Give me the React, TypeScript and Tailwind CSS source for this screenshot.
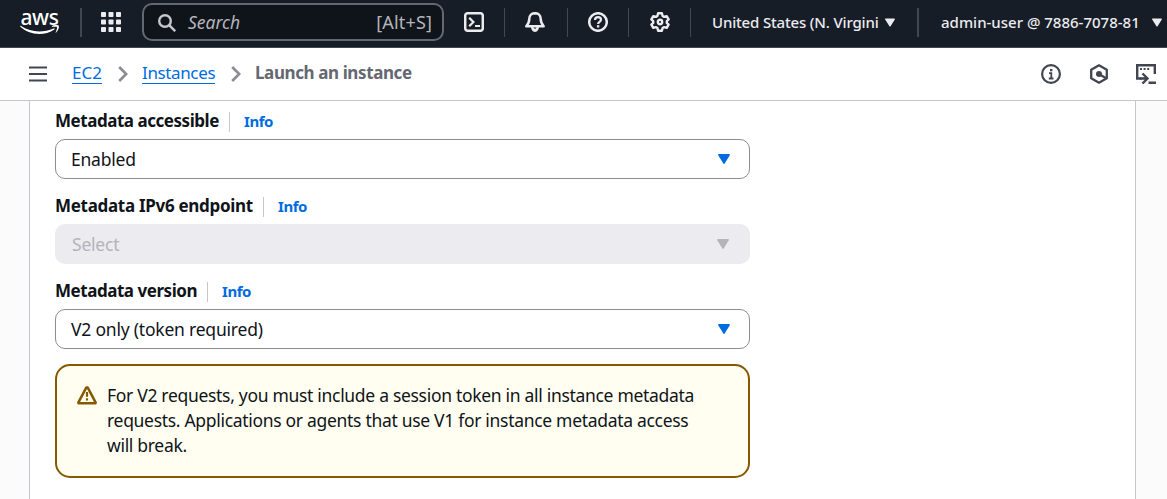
import type { ReactNode } from "react";

function Caret({ className }: { className: string }) {
  return (
    <svg viewBox="0 0 12 10" className={className}>
      <path d="M.9 .9h10.2L6 9.1z" fill="currentColor" stroke="currentColor" strokeWidth="1.6" strokeLinejoin="round" />
    </svg>
  );
}

function AwsLogo() {
  return (
    <div className="flex w-[39px] flex-col items-center text-white">
      <span className="h-[17px] text-[21px] leading-[14px] font-medium tracking-[-0.35px]">aws</span>
      <svg viewBox="0 0 39 10" className="-mt-0.5 h-[10px] w-[39px] shrink-0" fill="currentColor">
        <path d="M.2 1.2C.5.6 1 .8 1.5 1.2 6.500 4.500 12.800 6.400 19.200 6.400c4.800 0 9.900-1 14.500-3 .8-.3 1.300.5.6 1.100C30.200 7.600 24.300 9 19.200 9 11.900 9 5.200 6.200.3 1.800z" />
        <path d="M32 .9C34.500-.4 38 -.2 38.700.500c.7.900-.2 5-2.500 7-.4.300-.7.100-.5-.3.6-1.500 1.700-4.300 1.200-5C36.400 1.600 34 1.800 32.400 1.900c-.6 0-.8-.6-.4-1z" />
      </svg>
    </div>
  );
}

function Icon({ children, className = "" }: { children: ReactNode; className?: string }) {
  return (
    <svg
      viewBox="0 0 20 20"
      fill="none"
      stroke="currentColor"
      strokeWidth="2.5"
      className={`size-5 shrink-0 ${className}`}
    >
      {children}
    </svg>
  );
}

function Divider({ className = "" }: { className?: string }) {
  return <div className={`h-[29px] shrink-0 bg-[#424650] ${className}`} />;
}

function Header() {
  return (
    <header className="flex h-12 items-start overflow-hidden border-b border-[#424650] bg-[#161d26] text-[#ebebf0]">
      <div className="flex h-[44px] items-center pl-5">
        <AwsLogo />
        <Divider className="ml-[21px] w-[2px]" />
        <svg viewBox="0 0 20 20" className="ml-[19px] size-5" fill="currentColor">
          {[0, 7.5, 15].map((y) =>
            [0, 7.5, 15].map((x) => <rect key={`${x}-${y}`} x={x} y={y} width="5" height="5" rx=".8" />),
          )}
        </svg>
        <div className="ml-[21px] flex h-[38px] w-[302px] items-center rounded-[10px] border-2 border-[#656871] bg-[#0f141a] pr-[10px] pl-[14px] text-[#b4b4bb]">
          <svg viewBox="0 0 18 18" className="mt-[2px] size-[18px]" fill="none" stroke="#c6c6cd" strokeWidth="2.4">
            <circle cx="7" cy="7" r="5.8" />
            <path d="m11.200 11.200 6 6" />
          </svg>
          <span className="ml-[12px] text-[17.5px] italic">Search</span>
          <span className="ml-auto text-[18px] tracking-[0.150px]">[Alt+S]</span>
        </div>
        <Icon className="ml-5">
          <rect x="1.200" y="1.200" width="17.600" height="17.600" rx="2.500" />
          <path d="m5.200 5.700 4.200 4.300-4.200 4.300M11 14h5" strokeWidth="2.200" />
        </Icon>
        <Divider className="ml-5 w-px" />
        <Icon className="ml-5">
          <path d="M10 1.200c-3.500 0-5.700 2.400-5.700 5.600 0 3.700-1 5.400-3 7.500h17.400c-2-2.100-3-3.800-3-7.500 0-3.200-2.200-5.600-5.700-5.600Z" strokeLinejoin="round" />
          <path d="M6 14.500c0 2.900 1.500 5.400 4 5.400s4-2.500 4-5.400h-2.500c0 1.300-.5 2.200-1.500 2.200s-1.500-.9-1.500-2.200z" fill="currentColor" stroke="none" />
        </Icon>
        <Divider className="ml-[22px] w-px" />
        <Icon className="ml-5">
          <circle cx="10" cy="10" r="8.800" />
          <path d="M7 8c0-1.800 1.300-2.900 3.100-2.900 1.700 0 2.900 1 2.900 2.600 0 2-2.900 2.200-2.900 4.200" strokeWidth="2.200" />
          <path d="M8.900 13.200h2.400v2.300H8.900z" fill="currentColor" stroke="none" />
        </Icon>
        <Divider className="ml-5 w-px" />
        <Icon className="ml-[21px]">
          <path d="M8.100 1.300h3.800l.7 2.700 1.500.9 2.600-.8 1.900 3.300-1.800 1.700v1.800l1.800 1.700-1.900 3.300-2.600-.8-1.500.9-.7 2.700H8.100L7.400 16l-1.500-.9-2.600.8-1.900-3.300 1.800-1.700V9.100L1.400 7.400l1.900-3.300 2.600.8L7.400 4z" strokeWidth="2.400" strokeLinejoin="round" />
          <circle cx="10" cy="10" r="2.200" strokeWidth="2.400" />
        </Icon>
        <Divider className="ml-5 w-px" />
        <span className="mt-px ml-[21px] w-[168px] shrink-0 text-[15px] font-medium tracking-[-0.170px] whitespace-nowrap">United States (N. Virgini</span>
        <Caret className="ml-[5px] h-[9px] w-[10px] shrink-0" />
        <Divider className="ml-[22px] w-[2px]" />
        <span className="mt-px ml-[22px] w-[200px] shrink-0 text-[15px] font-medium whitespace-nowrap">admin-user @ 7886-7078-81</span>
        <Caret className="ml-[11px] h-[9px] w-[10px] shrink-0" />
      </div>
    </header>
  );
}

function Chevron() {
  return (
    <svg viewBox="0 0 10 16" className="h-4 w-[10px]" fill="none" stroke="#8c8c94" strokeWidth="2.700">
      <path d="m1.200 1 7 7-7 7" />
    </svg>
  );
}

function Breadcrumbs() {
  return (
    <nav className="flex h-[53px] items-center border-b border-[#c6c6cd] bg-white pr-[11px] pb-px pl-[29px] text-[17px] text-[#424650]">
      <svg viewBox="0 0 18 16" className="h-4 w-[18px]" stroke="currentColor" strokeWidth="2.200">
        <path d="M0 1.500h18M0 8h18M0 14.500h18" />
      </svg>
      <a className="ml-[25px] h-[21px] w-[30px] border-b border-[#006ce0] leading-[19px] text-[#006ce0]">EC2</a>
      <Crumb>
        <a className="h-[21px] w-[73px] border-b border-[#006ce0] leading-[19px] tracking-[-0.370px] text-[#006ce0]">Instances</a>
      </Crumb>
      <Crumb>
        <span className="-mt-0.5 leading-[19px] font-bold tracking-[-0.400px] text-[#656871]">Launch an instance</span>
      </Crumb>
      <div className="ml-auto flex items-center">
        <Icon>
          <circle cx="10" cy="10" r="8.900" strokeWidth="2.200" />
          <path d="M8 9.200h2.300v5.500M7.800 14.500h4.700" strokeWidth="1.800" />
          <path d="M9 5h2.400v2.300H9z" fill="currentColor" stroke="none" />
        </Icon>
        <Icon className="ml-7">
          <path d="m10 1.300 7.800 4.400v8.600L10 18.700l-7.800-4.400V5.700z" strokeWidth="2.300" strokeLinejoin="round" />
          <circle cx="10" cy="10" r="3" fill="currentColor" stroke="none" />
          <path d="m10 10 7 4.300" strokeWidth="2.200" />
        </Icon>
        <Icon className="ml-[27px]">
          <path d="M5.500 14.500H1.200V1.200h17.600V10" strokeWidth="2.400" />
          <path d="M4 5.100h2M7.600 5.100h2M11.200 5.100h2" strokeWidth="2" />
          <path d="M4 14.500h7M6.500 9.500l5 5-5 5M12.500 18.800H20" strokeWidth="2.400" />
        </Icon>
      </div>
    </nav>
  );
}

function Crumb({ children }: { children: ReactNode }) {
  return (
    <div className="ml-[15.500px] flex items-center gap-[14.500px]">
      <Chevron />
      {children}
    </div>
  );
}

function FieldLabel({ children, className }: { children: ReactNode; className: string }) {
  return (
    <div className="flex h-5 items-center whitespace-nowrap">
      <span className={`text-[17px] leading-5 font-bold ${className}`}>{children}</span>
      <div className="mt-0.5 ml-[10px] h-5 w-px shrink-0 bg-[#c6c6cd]" />
      <a className="ml-[14px] text-[15px] leading-5 font-bold tracking-[-0.450px] text-[#006ce0]">Info</a>
    </div>
  );
}

function Select({ value, disabled = false }: { value: string; disabled?: boolean }) {
  return (
    <div
      className={
        disabled
          ? "mt-2 flex h-10 items-center justify-between rounded-[10px] bg-[#ebebf0] pr-[21px] pl-[17px] text-[#b4b4bb]"
          : "mt-2 flex h-10 items-center justify-between rounded-[10px] border border-[#8c8c94] bg-white pr-[19px] pl-[15px] text-[#0f141a]"
      }
    >
      <span className="text-[17.5px] tracking-[-0.210px]">{value}</span>
      <Caret className={disabled ? "h-[10px] w-3 text-[#b4b4bb]" : "h-[10px] w-3 text-[#006ce0]"} />
    </div>
  );
}

function Alert() {
  return (
    <div className="mt-[15px] flex h-[114px] rounded-[15px] border-2 border-[#855900] bg-[#fffef0] pt-[17px] pl-5">
      <svg viewBox="0 0 20 20" className="mt-[2px] size-5" fill="none" stroke="#855900" strokeWidth="2.500" strokeLinejoin="round">
        <path d="M9.400 2.400h1.200l8.100 15.200-.4.700H1.700l-.4-.7z" />
        <path d="M10 7v4.800M10 13.300v2.300" strokeWidth="2.200" />
      </svg>
      <p className="ml-[10px] text-[17.5px] leading-[25px] tracking-[-0.307px] whitespace-nowrap">
        For V2 requests, you must include a session token in all instance metadata
        <br />
        requests. Applications or agents that use V1 for instance metadata access
        <br />
        will break.
      </p>
    </div>
  );
}

export default function App() {
  return (
    <div className="flex h-[499px] w-[1167px] flex-col overflow-hidden bg-[#fbfbfb] font-['Noto_Sans',sans-serif] text-[#0f141a]">
      <Header />
      <Breadcrumbs />
      <main className="ml-[29px] w-[1107px] grow border-x border-[#c6c6cd] bg-white pt-[10px] pl-[25px]">
        <div className="w-[695px]">
          <FieldLabel className="w-[164px] tracking-[-0.460px]">Metadata accessible</FieldLabel>
          <Select value="Enabled" />
          <div className="mt-[17px]">
            <FieldLabel className="w-[198px] tracking-[-0.300px]">Metadata IPv6 endpoint</FieldLabel>
            <Select value="Select" disabled />
          </div>
          <div className="mt-[17px]">
            <FieldLabel className="w-[142px] tracking-[-0.460px]">Metadata version</FieldLabel>
            <Select value="V2 only (token required)" />
          </div>
          <Alert />
        </div>
      </main>
    </div>
  );
}
